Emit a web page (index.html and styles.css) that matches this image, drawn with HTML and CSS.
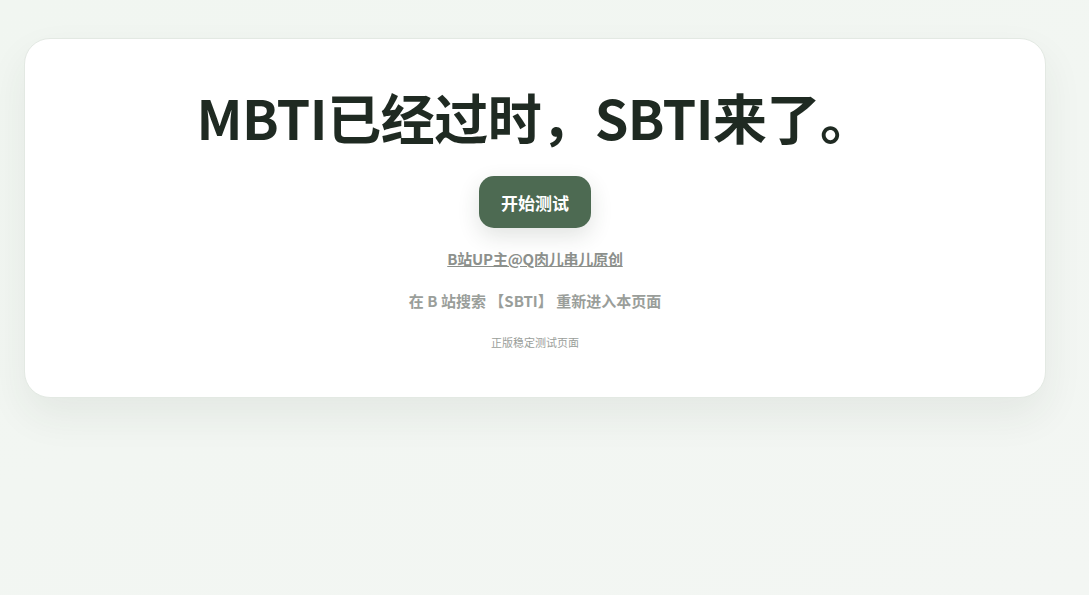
FILE: index.html
```html
<!DOCTYPE html>
<html lang="zh-CN">
<head>
<meta charset="utf-8">
<title>SBTI</title>
<link rel="stylesheet" href="styles.css">
</head>
<body>
<main class="page">
  <section class="card">
    <h1 class="title">MBTI已经过时，SBTI来了。</h1>
    <button class="start">开始测试</button>
    <a class="author" href="#">B站UP主@Q肉儿串儿原创</a>
    <p class="hint">在 B 站搜索 【SBTI】 重新进入本页面</p>
    <p class="note">正版稳定测试页面</p>
  </section>
</main>
</body>
</html>
```
FILE: styles.css
```css
html, body {
  margin: 0;
  padding: 0;
  height: 100%;
}
body {
  background: linear-gradient(160deg, #f1f6f1 0%, #f3f6f3 100%);
  font-family: "Noto Sans CJK SC", "Noto Sans", sans-serif;
  overflow: hidden;
}
.page {
  padding: 38px 43px 0 24px;
}
.card {
  background: #ffffff;
  border: 1px solid #e3e9e3;
  border-radius: 26px;
  box-shadow: 0 18px 40px rgba(40, 60, 40, 0.07);
  height: 360px;
  box-sizing: border-box;
  display: flex;
  flex-direction: column;
  align-items: center;
  padding-top: 42px;
}
.title {
  margin: 0;
  font-size: 54px;
  line-height: 72px;
  font-weight: 700;
  color: #1f2a22;
  letter-spacing: -0.5px;
}
.start {
  margin-top: 23px;
  width: 112px;
  height: 52px;
  border: none;
  border-radius: 15px;
  background: #4d6a52;
  color: #ffffff;
  font-family: inherit;
  font-size: 17px;
  font-weight: 700;
  box-shadow: 0 8px 22px rgba(40, 60, 40, 0.14);
}
.author {
  margin-top: 20px;
  font-size: 15px;
  line-height: 22px;
  font-weight: 700;
  color: #8c908c;
  text-decoration: underline;
  letter-spacing: -0.2px;
}
.hint {
  margin: 20px 0 0;
  font-size: 15px;
  line-height: 22px;
  font-weight: 700;
  color: #9a9e9a;
}
.note {
  margin: 22px 0 0;
  font-size: 11px;
  line-height: 16px;
  color: #9a9e9a;
}
```
